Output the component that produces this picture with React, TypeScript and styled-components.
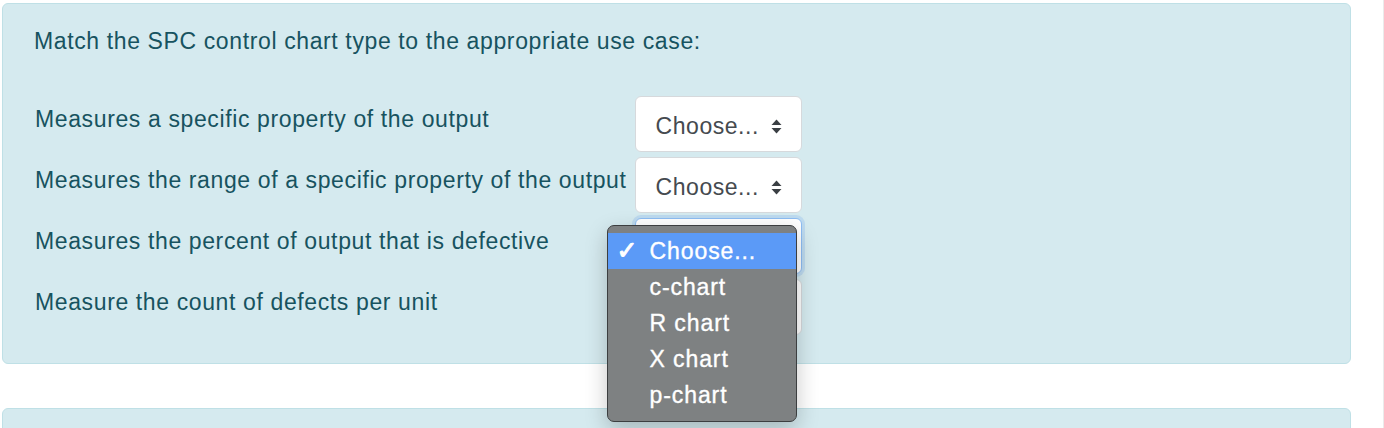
import React from "react";
import styled, { createGlobalStyle } from "styled-components";

const Global = createGlobalStyle`
  html, body { margin: 0; padding: 0; background: #ffffff; }
  body { font-family: "Liberation Sans", Arial, Helvetica, sans-serif; }
`;

const Page = styled.div`
  width: 1384px;
  height: 428px;
  box-sizing: border-box;
  padding: 3px 32px 0 2px;
  border-right: 1px solid #ebebeb;
  overflow: hidden;
  display: flex;
  flex-direction: column;
  gap: 44px;
`;

const Panel = styled.div<{ $short?: boolean }>`
  background: #d5eaef;
  border: 1px solid #bfe0e6;
  border-radius: 6px;
  color: #175360;
  font-size: 23px;
  letter-spacing: 0.62px;
  line-height: 30px;
  padding: ${(p) => (p.$short ? "0" : "22px 30px 28px 31px")};
  min-height: ${(p) => (p.$short ? "40px" : "auto")};
  flex-shrink: 0;
`;

const Title = styled.div`
  margin-bottom: 40px;
`;

const Grid = styled.div`
  display: grid;
  grid-template-columns: max-content max-content;
  column-gap: 8px;
  row-gap: 5px;
`;

const Label = styled.div`
  padding-top: 8px;
  padding-left: 1px;
`;

const SelectWrap = styled.div`
  position: relative;
  width: 167px;
`;

const SelectBox = styled.div<{ $focused?: boolean }>`
  box-sizing: border-box;
  height: 56px;
  width: 167px;
  background: #ffffff;
  border: 1px solid ${(p) => (p.$focused ? "#8dbdf3" : "#d6d9dc")};
  box-shadow: ${(p) => (p.$focused ? "0 0 0 3px rgba(120, 170, 240, 0.25)" : "none")};
  border-radius: 6px;
  display: flex;
  align-items: center;
  justify-content: space-between;
  padding: 4px 19px 0 20px;
  color: #454a4f;
  font-size: 23px;
  letter-spacing: 0.55px;
`;

const Arrows = styled.svg`
  flex-shrink: 0;
`;

const Menu = styled.div`
  position: absolute;
  left: -28px;
  top: 7px;
  width: 190px;
  box-sizing: border-box;
  padding: 7px 0 8px;
  background: #7e8182;
  border: 1px solid #3c3e40;
  border-radius: 7px;
  box-shadow: 0 8px 22px rgba(0, 0, 0, 0.22);
  z-index: 10;
`;

const MenuItem = styled.div<{ $active?: boolean }>`
  height: 36px;
  display: flex;
  align-items: center;
  background: ${(p) => (p.$active ? "#5b9af7" : "transparent")};
  color: #ffffff;
  font-size: 23px;
  letter-spacing: 0.9px;
  -webkit-text-stroke: 0.35px #ffffff;
  padding-left: 9px;
`;

const Check = styled.span`
  width: 33px;
  font-size: 25px;
  font-family: "DejaVu Sans", sans-serif;
  -webkit-text-stroke: 1px #ffffff;
`;

const ArrowIcon = () => (
  <Arrows width="11" height="15" viewBox="0 0 11 15">
    <path d="M5.5 0.5 L10.5 6 H0.5 Z" fill="#3a3f44" />
    <path d="M5.5 14.5 L10.5 9 H0.5 Z" fill="#3a3f44" />
  </Arrows>
);

const rows = [
  "Measures a specific property of the output",
  "Measures the range of a specific property of the output",
  "Measures the percent of output that is defective",
  "Measure the count of defects per unit",
];

const options = ["Choose...", "c-chart", "R chart", "X chart", "p-chart"];

export default function App() {
  return (
    <>
      <Global />
      <Page>
        <Panel>
          <Title>Match the SPC control chart type to the appropriate use case:</Title>
          <Grid>
            {rows.map((r, i) => (
              <React.Fragment key={r}>
                <Label>{r}</Label>
                <SelectWrap>
                  <SelectBox $focused={i === 2}>
                    <span>Choose...</span>
                    <ArrowIcon />
                  </SelectBox>
                  {i === 2 && (
                    <Menu>
                      {options.map((o, j) => (
                        <MenuItem key={o} $active={j === 0}>
                          <Check>{j === 0 ? "✓" : ""}</Check>
                          {o}
                        </MenuItem>
                      ))}
                    </Menu>
                  )}
                </SelectWrap>
              </React.Fragment>
            ))}
          </Grid>
        </Panel>
        <Panel $short />
      </Page>
    </>
  );
}
